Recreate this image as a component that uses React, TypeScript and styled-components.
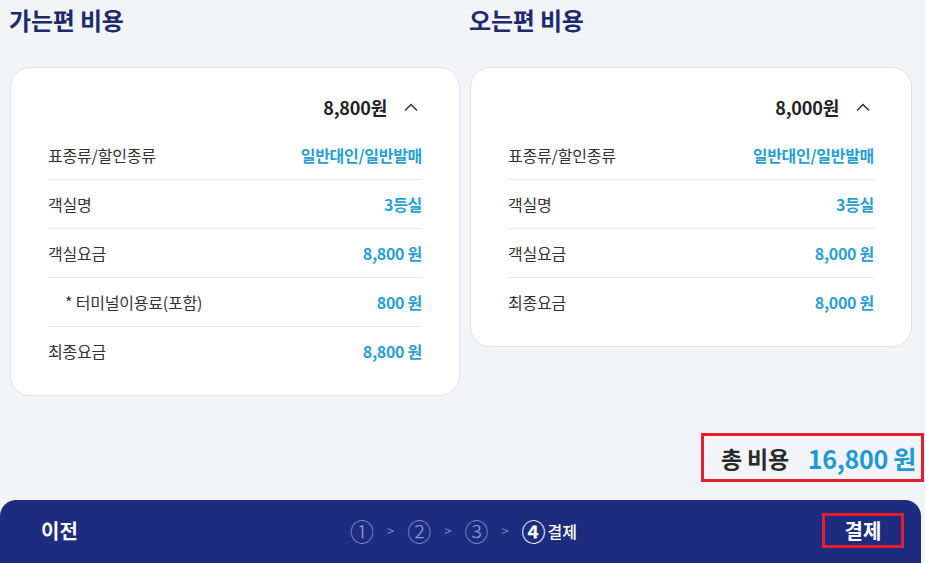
import React from "react";
import styled, { createGlobalStyle } from "styled-components";

const GlobalStyle = createGlobalStyle`
  body {
    margin: 0;
    background: #f2f4f7;
    font-family: "Noto Sans CJK KR", "Noto Sans", sans-serif;
  }
  * { box-sizing: border-box; }
`;

const Page = styled.div`
  width: 925px;
  height: 563px;
  overflow: hidden;
  display: flex;
  flex-direction: column;
`;

const Columns = styled.div`
  display: grid;
  grid-template-columns: 450px 442px;
  column-gap: 10px;
  padding-left: 10px;
`;

const Column = styled.div`
  display: flex;
  flex-direction: column;
  align-items: stretch;
`;

const Heading = styled.h2`
  margin: 0 0 0 -1px;
  height: 67px;
  padding-top: 4px;
  font-size: 24px;
  line-height: 32px;
  font-weight: 700;
  color: #1d2a6b;
  letter-spacing: -0.2px;
`;

const Card = styled.div`
  background: #fff;
  border: 1px solid #dfe2e7;
  border-radius: 20px;
  padding: 23px 37px 20px;
`;

const AmountRow = styled.div`
  height: 32px;
  margin-bottom: 8px;
  display: flex;
  align-items: center;
  justify-content: flex-end;
  gap: 17px;
  padding-right: 4px;
`;

const Amount = styled.span`
  font-size: 18px;
  font-weight: 700;
  color: #222;
  letter-spacing: -0.2px;
`;

const Row = styled.div`
  height: 49px;
  display: flex;
  align-items: center;
  justify-content: space-between;
  border-bottom: 1px solid #e6e8ec;
  &:last-child { border-bottom: none; height: 48px; }
`;

const Label = styled.span<{ $indent?: boolean }>`
  font-size: 16px;
  color: #333;
  padding-left: ${(p) => (p.$indent ? "17px" : "0")};
  letter-spacing: -0.2px;
`;

const Value = styled.span`
  font-size: 16px;
  font-weight: 600;
  color: #2a9fd3;
  letter-spacing: -0.3px;
`;

const TotalWrap = styled.div`
  display: flex;
  justify-content: flex-end;
  margin-top: 37px;
  padding-right: 1px;
`;

const TotalBox = styled.div`
  width: 223px;
  height: 49px;
  border: 3px solid #e3202b;
  display: flex;
  align-items: center;
  justify-content: flex-end;
  gap: 19px;
  padding-right: 5px;
`;

const TotalLabel = styled.span`
  font-size: 23px;
  font-weight: 700;
  color: #2a2a2a;
  letter-spacing: -0.2px;
`;

const TotalValue = styled.span`
  font-size: 25px;
  font-weight: 700;
  color: #1c9ad6;
  letter-spacing: -0.3px;
`;

const Footer = styled.div`
  margin-top: 18px;
  margin-right: 4px;
  height: 70px;
  background: #1e2c80;
  border-radius: 16px 16px 0 0;
  display: grid;
  grid-template-columns: 1fr auto 1fr;
  align-items: start;
  padding: 11px 17px 0 41px;
`;

const PrevButton = styled.span`
  justify-self: start;
  font-size: 20px;
  font-weight: 700;
  color: #fff;
  line-height: 40px;
`;

const Steps = styled.div`
  display: flex;
  align-items: center;
  gap: 13px;
  height: 40px;
  padding-right: 18px;
`;

const Step = styled.span<{ $active?: boolean }>`
  font-size: 24px;
  line-height: 40px;
  color: ${(p) => (p.$active ? "#ffffff" : "#8f9cd4")};
  font-weight: ${(p) => (p.$active ? 700 : 300)};
  display: flex;
  align-items: center;
  gap: 2px;
`;

const StepName = styled.span`
  font-size: 16px;
  font-weight: 500;
  color: #fff;
`;

const Sep = styled.span`
  font-size: 13px;
  color: #7a87c4;
  line-height: 40px;
`;

const PayButton = styled.span`
  justify-self: end;
  width: 82px;
  height: 35px;
  margin-top: 2px;
  border: 3px solid #e3202b;
  display: flex;
  align-items: center;
  justify-content: center;
  font-size: 20px;
  font-weight: 700;
  color: #fff;
`;

const Chevron = () => (
  <svg width="14" height="8" viewBox="0 0 14 8">
    <polyline points="1,7.5 7,1.5 13,7.5" fill="none" stroke="#333" strokeWidth="1.5" />
  </svg>
);

type Item = { label: string; value: string; indent?: boolean };

const outbound: Item[] = [
  { label: "표종류/할인종류", value: "일반대인/일반발매" },
  { label: "객실명", value: "3등실" },
  { label: "객실요금", value: "8,800 원" },
  { label: "* 터미널이용료(포함)", value: "800 원", indent: true },
  { label: "최종요금", value: "8,800 원" },
];

const inbound: Item[] = [
  { label: "표종류/할인종류", value: "일반대인/일반발매" },
  { label: "객실명", value: "3등실" },
  { label: "객실요금", value: "8,000 원" },
  { label: "최종요금", value: "8,000 원" },
];

const CostCard = ({ title, amount, items }: { title: string; amount: string; items: Item[] }) => (
  <Column>
    <Heading>{title}</Heading>
    <Card>
      <AmountRow>
        <Amount>{amount}</Amount>
        <Chevron />
      </AmountRow>
      {items.map((it) => (
        <Row key={it.label}>
          <Label $indent={it.indent}>{it.label}</Label>
          <Value>{it.value}</Value>
        </Row>
      ))}
    </Card>
  </Column>
);

const App = () => {
  return (
    <Page>
      <GlobalStyle />
      <Columns>
        <CostCard title="가는편 비용" amount="8,800원" items={outbound} />
        <CostCard title="오는편 비용" amount="8,000원" items={inbound} />
      </Columns>
      <TotalWrap>
        <TotalBox>
          <TotalLabel>총 비용</TotalLabel>
          <TotalValue>16,800 원</TotalValue>
        </TotalBox>
      </TotalWrap>
      <Footer>
        <PrevButton>이전</PrevButton>
        <Steps>
          <Step>①</Step>
          <Sep>&gt;</Sep>
          <Step>②</Step>
          <Sep>&gt;</Sep>
          <Step>③</Step>
          <Sep>&gt;</Sep>
          <Step $active>
            ④<StepName>결제</StepName>
          </Step>
        </Steps>
        <PayButton>결제</PayButton>
      </Footer>
    </Page>
  );
};

export default App;
